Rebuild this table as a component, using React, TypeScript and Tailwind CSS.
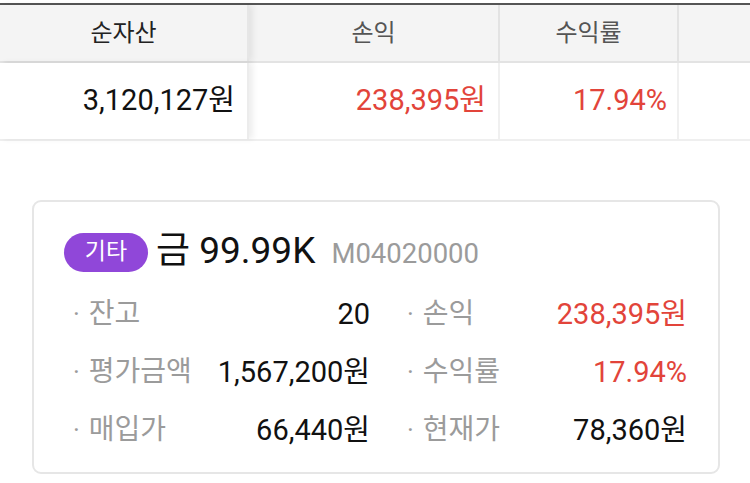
import React from 'react';

const FONT = "font-['Roboto','Noto_Sans_CJK_KR',sans-serif]";

interface Stat {
    label: string;
    value: string;
    red?: boolean;
}

const leftStats: Stat[] = [
    { label: '잔고', value: '20' },
    { label: '평가금액', value: '1,567,200원' },
    { label: '매입가', value: '66,440원' },
];

const rightStats: Stat[] = [
    { label: '손익', value: '238,395원', red: true },
    { label: '수익률', value: '17.94%', red: true },
    { label: '현재가', value: '78,360원' },
];

function StatRow({ stat }: { stat: Stat }) {
    return (
        <div className="h-[58px] flex items-center justify-between">
            <div className="flex items-center text-[28px] text-[#9b9b9b]">
                <span className="text-[26px]">·</span>
                <span className="ml-[9px]">{stat.label}</span>
            </div>
            <span className={`text-[29px] ${stat.red ? 'text-[#e2443a]' : 'text-[#111]'}`}>{stat.value}</span>
        </div>
    );
}

export default function App() {
    return (
        <div className={`w-[750px] h-[483px] bg-white overflow-hidden ${FONT}`}>
            {/* Summary table */}
            <div className="pt-[3px]">
                <div className="border-t-2 border-[#555]">
                    {/* Header */}
                    <div className="flex h-[58px] bg-[#f4f4f4] border-b-2 border-[#e3e3e3]">
                        <div className="relative z-10 w-[249px] shrink-0 flex items-center justify-center border-r-2 border-[#e6e6e6] shadow-[4px_0_6px_rgba(0,0,0,0.07)] text-[24px] text-[#222]">
                            순자산
                        </div>
                        <div className="w-[251px] shrink-0 flex items-center justify-center border-r-2 border-[#e3e3e3] text-[24px] text-[#555]">
                            손익
                        </div>
                        <div className="w-[179px] shrink-0 flex items-center justify-center border-r-2 border-[#e3e3e3] text-[24px] text-[#555]">
                            수익률
                        </div>
                        <div className="flex-1" />
                    </div>
                    {/* Values */}
                    <div className="flex h-[78px] border-b-2 border-[#efefef]">
                        <div className="relative z-10 w-[249px] shrink-0 flex items-center justify-end pr-[12px] bg-white border-r-2 border-[#ececec] shadow-[4px_0_6px_rgba(0,0,0,0.07)] text-[29px] text-[#111]">
                            3,120,127원
                        </div>
                        <div className="w-[251px] shrink-0 flex items-center justify-end pr-[12px] border-r-2 border-[#f0f0f0] text-[29px] text-[#e2443a]">
                            238,395원
                        </div>
                        <div className="w-[179px] shrink-0 flex items-center justify-end pr-[10px] border-r-2 border-[#f0f0f0] text-[29px] text-[#e2443a]">
                            17.94%
                        </div>
                        <div className="flex-1" />
                    </div>
                </div>
            </div>

            {/* Holding card */}
            <div className="mt-[59px] ml-[32px] w-[688px] h-[274px] rounded-[9px] border-2 border-[#e6e6e6] px-[30px] pt-[29px]">
                <div className="flex items-center">
                    <span className="w-[84px] h-[39px] rounded-full bg-[#9047d9] flex items-center justify-center text-[23px] text-white">
                        기타
                    </span>
                    <div className="ml-[8px] flex items-baseline">
                        <span className="text-[37px] leading-[40px] text-[#111]">금 99.99K</span>
                        <span className="ml-[16px] text-[27.5px] text-[#9b9b9b]">M04020000</span>
                    </div>
                </div>
                <div className="mt-[11px] pl-[9px] pr-[1px] grid grid-cols-[297px_1fr] gap-x-[37px]">
                    <div>
                        {leftStats.map((s) => (
                            <StatRow key={s.label} stat={s} />
                        ))}
                    </div>
                    <div>
                        {rightStats.map((s) => (
                            <StatRow key={s.label} stat={s} />
                        ))}
                    </div>
                </div>
            </div>
        </div>
    );
}
